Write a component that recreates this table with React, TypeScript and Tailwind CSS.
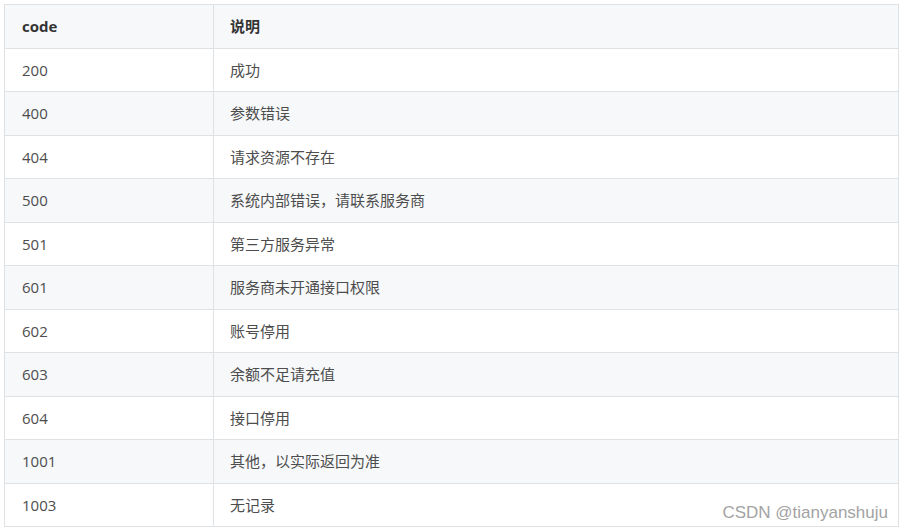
import React from 'react';

const rows: [string, string][] = [
  ['200', '成功'],
  ['400', '参数错误'],
  ['404', '请求资源不存在'],
  ['500', '系统内部错误，请联系服务商'],
  ['501', '第三方服务异常'],
  ['601', '服务商未开通接口权限'],
  ['602', '账号停用'],
  ['603', '余额不足请充值'],
  ['604', '接口停用'],
  ['1001', '其他，以实际返回为准'],
  ['1003', '无记录'],
];

export default function App() {
  return (
    <div
      className="relative h-[530px] w-[902px] bg-white pl-[4px] pt-[4px]"
      style={{ fontFamily: '"Open Sans", "Noto Sans CJK SC", sans-serif' }}
    >
      <table className="w-[895px] border-collapse text-[15px] text-[#4d4d4d]">
        <thead>
          <tr className="h-[43.5px] bg-[#f6f8fa]">
            <th className="w-[209px] border border-[#dfe2e5] px-[17px] text-left font-bold text-[#333333]">
              code
            </th>
            <th className="border border-[#dfe2e5] px-[16px] text-left font-bold text-[#333333]">
              说明
            </th>
          </tr>
        </thead>
        <tbody>
          {rows.map(([code, desc], i) => (
            <tr key={code} className={`h-[43.5px] ${i % 2 === 1 ? 'bg-[#f6f8fa]' : 'bg-white'}`}>
              <td className="border border-[#dfe2e5] px-[17px]">{code}</td>
              <td className="border border-[#dfe2e5] px-[16px]">{desc}</td>
            </tr>
          ))}
        </tbody>
      </table>
      <div
        className="absolute right-[14px] top-[500px] text-[17px] text-[#a3a3a3]"
        style={{ fontFamily: '"Liberation Sans", Arial, sans-serif' }}
      >
        CSDN @tianyanshuju
      </div>
    </div>
  );
}
